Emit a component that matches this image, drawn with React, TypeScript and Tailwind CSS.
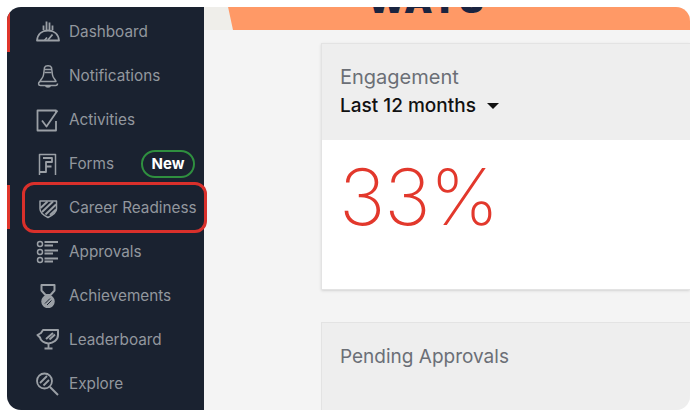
const icons: Record<string, React.ReactNode> = {
  dashboard: (
    <>
      <path d="M1 20.500C1.500 14 6 10.500 12 10.500C18 10.500 22.500 14 23 20.500Z" strokeWidth="1.800" />
      <path d="M12 20L16.500 14.500M8.500 20.500L11 17.500" strokeWidth="1.800" />
      <path d="M7.500 10V5.500M10.500 10V1.500M13.500 10V2.500M16.500 10V5.500" strokeWidth="1.800" />
    </>
  ),
  notifications: (
    <>
      <path d="M8.500 3.500C9.500 1 14.500 1 15.500 3.500L16.500 11C17 14.500 19.500 15 20 17.500H4C4.500 15 7 14.500 7.500 11Z" />
      <path d="M9 5.500H15M8.500 8.500H15.500" />
      <path d="M4 17.500C2 18.500 2 21.500 4.500 21.500H19.500C21 21.500 21.500 20.500 21.500 19.500M9.500 21.500C10 23.500 14 23.500 14.500 21.500" />
    </>
  ),
  activities: (
    <>
      <path d="M20 13V22.500H1.500V2.500H20V5" strokeWidth="1.800" />
      <path d="M6 12.500L10.500 18.500L21.500 2.500" strokeWidth="1.800" />
    </>
  ),
  forms: (
    <>
      <path d="M3.500 23V2.500H19.500V23" />
      <path d="M7 6H16V10H10V14.500H15.500M10 14.500V20H3.500" strokeWidth="1.800" />
    </>
  ),
  career: (
    <>
      <path d="M4 5H20.500V13C20.500 16.500 16 19.500 12 21.500C8 19.500 4 16.500 4 13Z" />
      <path d="M4.500 12L11.500 5.500M6 16L17 5.500M9.500 18.500L20 8.500M14 19L20 13.500" strokeWidth="2" />
    </>
  ),
  approvals: (
    <>
      <circle cx="4" cy="4" r="2.500" />
      <circle cx="4" cy="12" r="2.500" />
      <circle cx="4" cy="20" r="2.500" />
      <path d="M8.500 2H22M8.500 5.500H17M8.500 10.500H22M8.500 13.500H17M8.500 18.500H22M8.500 21.500H17" strokeWidth="1.800" />
    </>
  ),
  achievements: (
    <>
      <path d="M5.500 1H18.500V6.500L14.500 11H9.500L5.500 6.500Z" strokeWidth="2" />
      <circle cx="12" cy="17.500" r="6" fill="#9ba0a6" />
      <path d="M9 19.500L14 14.500M11 21L15.500 16.500" stroke="#1a2230" strokeWidth="1" />
    </>
  ),
  leaderboard: (
    <>
      <path d="M7 2H22V7C22 12 17 15 12.500 15.500C8 15 4.500 12.500 4 9.500L1.500 7L5 5Z" strokeWidth="2" />
      <path d="M10 11L17 5M13.500 11.500L19 6.500" strokeWidth="2" />
      <path d="M12.500 15.500V19.500M8.500 20.500H16.500" strokeWidth="1.800" />
    </>
  ),
  explore: (
    <>
      <circle cx="8.500" cy="9" r="7.500" strokeWidth="1.800" />
      <path d="M4 11L11 4M7.500 13.500L13 8" strokeWidth="1.800" />
      <path d="M14 15L22 23" strokeWidth="2" />
    </>
  ),
};

const navItems = [
  { key: "dashboard", label: "Dashboard" },
  { key: "notifications", label: "Notifications" },
  { key: "activities", label: "Activities" },
  { key: "forms", label: "Forms" },
  { key: "career", label: "Career Readiness" },
  { key: "approvals", label: "Approvals" },
  { key: "achievements", label: "Achievements" },
  { key: "leaderboard", label: "Leaderboard" },
  { key: "explore", label: "Explore" },
];

function NavIcon({ name }: { name: string }) {
  return (
    <svg viewBox="0 0 24 24" fill="none" stroke="#9ba0a6" strokeWidth="1.500" strokeLinejoin="round" className="h-6 w-6 shrink-0">
      {icons[name]}
    </svg>
  );
}

export default function App() {
  return (
    <div className="h-[417px] w-[697px] bg-white p-[7px] font-['Inter',sans-serif]">
      <div className="flex h-full w-[683px] overflow-hidden rounded-[14px] bg-[#f4f4f4]">

        {/* SIDEBAR */}
        <nav className="w-[197px] shrink-0 bg-[#1a2230] pt-[3px]">
          {navItems.map((item) => (
            <div key={item.key} className="relative flex h-11 items-center gap-[9px] pl-[29px] text-[15.3px] text-[#92979e]">
              {item.key === "dashboard" && <span className="absolute -top-[3px] left-0 h-[45px] w-[3px] bg-[#e0352b]" />}
              {item.key === "career" && (
                <>
                  <span className="absolute -top-px left-0 h-11 w-[3px] bg-[#e0352b]" />
                  <span className="absolute -top-1 left-[15px] z-10 h-[51px] w-[185px] rounded-[12px] border-[3px] border-[#d9302b]" />
                </>
              )}
              <NavIcon name={item.key} />
              <span className="whitespace-nowrap">{item.label}</span>
              {item.key === "forms" && (
                <span className="ml-[18px] flex h-7 w-[54px] items-center justify-center rounded-full border-2 border-[#2f8f3f] text-[15px] font-bold text-white">
                  New
                </span>
              )}
            </div>
          ))}
        </nav>

        {/* MAIN */}
        <main className="min-w-0 flex-1">
          <div className="flex h-[23px] overflow-hidden bg-[#ff9966]">
            <div className="h-full w-[29px] bg-[#efeeea] [clip-path:polygon(0_0,83%_0,100%_100%,0_100%)]" />
            <div className="ml-[134px] -mt-[25px] text-[36px] leading-[36px] font-black tracking-[1px] text-[#1a2440]">WAYS</div>
          </div>

          <div className="pl-[117px] pt-[13px]">
            <section className="h-[247px] border border-r-0 border-[#e3e3e3] bg-white shadow-sm">
              <div className="h-[96px] bg-[#eeeeee] pl-[18px] pt-[20px]">
                <p className="text-[20px] leading-[26px] text-[#6b6f76]">Engagement</p>
                <div className="mt-[2px] flex items-center gap-[11px] text-[19px] leading-[28px] font-medium text-[#111]">
                  Last 12 months
                  <span className="h-0 w-0 border-x-[6px] border-t-[6px] border-x-transparent border-t-[#111]" />
                </div>
              </div>
              <p className="pl-[17px] pt-[7px] text-[78px] leading-[100px] font-extralight tracking-[-1px] text-[#e2382c]">33%</p>
            </section>

            <section className="mt-8 h-[100px] border border-r-0 border-[#e3e3e3] bg-[#eeeeee] pl-[18px] pt-[21px]">
              <p className="text-[19px] leading-[26px] text-[#6b6f76]">Pending Approvals</p>
            </section>
          </div>
        </main>
      </div>
    </div>
  );
}
